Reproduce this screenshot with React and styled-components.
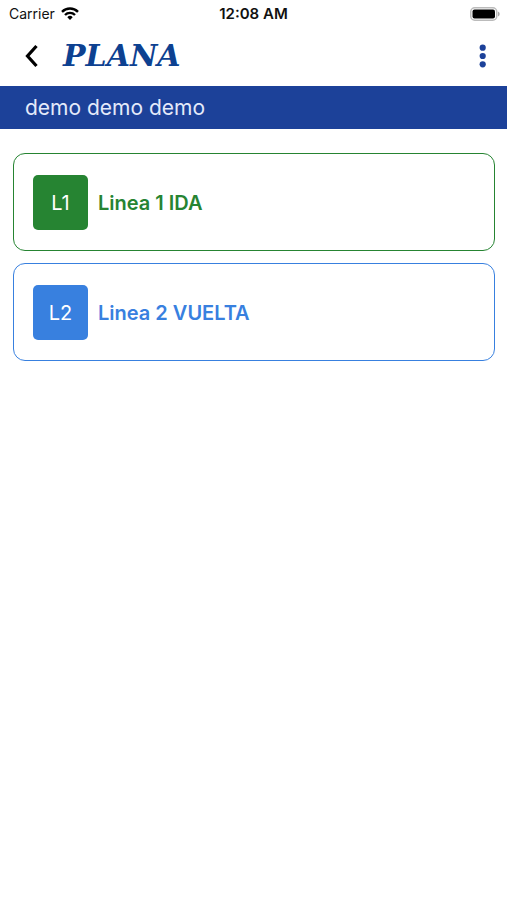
import React from "react";
import styled, { createGlobalStyle } from "styled-components";

const GlobalStyle = createGlobalStyle`
    * { box-sizing: border-box; }
    body {
        margin: 0;
        background: #fff;
        font-family: Inter, "Liberation Sans", sans-serif;
    }
`;

const StatusBar = styled.div`
    display: grid;
    grid-template-columns: 1fr auto 1fr;
    align-items: center;
    height: 27px;
    padding: 0 7px;
    font-size: 14px;
    color: #111;
`;

const Carrier = styled.div`
    display: flex;
    align-items: center;
    gap: 6px;
    padding-left: 2px;
`;

const Clock = styled.time`
    font-size: 15px;
    font-weight: 600;
`;

const Battery = styled.svg`
    justify-self: end;
`;

const Header = styled.header`
    display: flex;
    align-items: center;
    height: 59px;
    padding: 0 8px 2px 16px;
`;

const IconButton = styled.button`
    display: flex;
    align-items: center;
    justify-content: center;
    width: 32px;
    height: 40px;
    padding: 0;
    border: 0;
    background: none;
    cursor: pointer;
`;

const Logo = styled.div`
    flex: 1;
    padding-left: 15px;
    font-family: "DejaVu Serif", "Liberation Serif", serif;
    font-size: 30px;
    font-weight: 700;
    font-style: italic;
    line-height: 36px;
    color: #0d4191;
`;

const Banner = styled.h1`
    margin: 0;
    padding: 0 25px;
    background: #1c4199;
    color: #e4eafa;
    font-size: 21px;
    font-weight: 400;
    line-height: 43px;
`;

const LineList = styled.main`
    display: flex;
    flex-direction: column;
    gap: 12px;
    padding: 24px 12px 24px 13px;
`;

const LineCard = styled.button`
    display: flex;
    align-items: center;
    gap: 10px;
    width: 100%;
    padding: 21px 19px 20px;
    border: 1px solid ${(props) => props.$color};
    border-radius: 12px;
    background: #fff;
    color: ${(props) => props.$color};
    font-family: inherit;
    font-size: 20px;
    font-weight: 600;
    text-align: left;
    cursor: pointer;
`;

const LineBadge = styled.span`
    display: flex;
    align-items: center;
    justify-content: center;
    width: 55px;
    height: 55px;
    border-radius: 5px;
    background: ${(props) => props.$color};
    color: #fff;
    font-weight: 400;
`;

const lines = [
    { code: "L1", name: "Linea 1 IDA", color: "#268432" },
    { code: "L2", name: "Linea 2 VUELTA", color: "#3880df" },
];

const App = () => {
    return (
        <>
            <GlobalStyle />
            <StatusBar>
                <Carrier>
                    Carrier
                    <svg width="18" height="13" viewBox="0 0 18 13" fill="none" stroke="#000" strokeWidth="2.4">
                        <path d="M1 4.8a11.3 11.3 0 0 1 16 0" />
                        <path d="M4 8a7 7 0 0 1 10 0" />
                        <path d="M9 13L6.3 10.2a3.8 3.8 0 0 1 5.4 0z" fill="#000" stroke="none" />
                    </svg>
                </Carrier>
                <Clock>12:08 AM</Clock>
                <Battery width="30" height="14" viewBox="0 0 30 14">
                    <rect x="0.75" y="0.75" width="26" height="12.5" rx="4" fill="none" stroke="#bbb" strokeWidth="1.5" />
                    <rect x="2.5" y="2.5" width="22.5" height="9" rx="2" />
                    <path d="M28 4.5v5q1.7-.8 1.7-2.5T28 4.5z" fill="#aaa" />
                </Battery>
            </StatusBar>
            <Header>
                <IconButton aria-label="Back">
                    <svg width="14" height="24" viewBox="0 0 14 24" fill="none" stroke="#000" strokeWidth="3.2">
                        <path d="M11.5 2L2.5 12l9 10" />
                    </svg>
                </IconButton>
                <Logo>PLANA</Logo>
                <IconButton aria-label="More options">
                    <svg width="8" height="24" viewBox="0 0 8 24" fill="#1c4199">
                        <circle cx="3.7" cy="3.7" r="3.1" />
                        <circle cx="3.7" cy="12" r="3.1" />
                        <circle cx="3.7" cy="20.3" r="3.1" />
                    </svg>
                </IconButton>
            </Header>
            <Banner>demo demo demo</Banner>
            <LineList>
                {lines.map((line) => (
                    <LineCard key={line.code} $color={line.color}>
                        <LineBadge $color={line.color}>{line.code}</LineBadge>
                        {line.name}
                    </LineCard>
                ))}
            </LineList>
        </>
    );
};

export default App;
